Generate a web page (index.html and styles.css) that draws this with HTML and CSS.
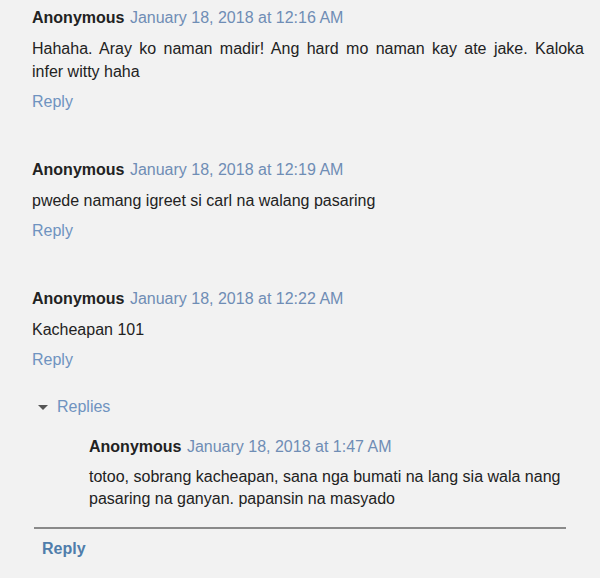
FILE: index.html
```html
<!DOCTYPE html>
<html lang="en">
<head>
    <meta charset="UTF-8">
    <title>Comments</title>
    <link rel="stylesheet" href="styles.css">
</head>
<body>
    <div class="comments">
        <div class="comment first">
            <div class="comment-header">
                <span class="user">Anonymous</span>
                <span class="datetime">January 18, 2018 at 12:16 AM</span>
            </div>
            <p class="comment-content">Hahaha. Aray ko naman madir! Ang hard mo naman kay ate jake. Kaloka infer witty haha</p>
            <div class="comment-actions"><a href="#">Reply</a></div>
        </div>

        <div class="comment">
            <div class="comment-header">
                <span class="user">Anonymous</span>
                <span class="datetime">January 18, 2018 at 12:19 AM</span>
            </div>
            <p class="comment-content">pwede namang igreet si carl na walang pasaring</p>
            <div class="comment-actions"><a href="#">Reply</a></div>
        </div>

        <div class="comment">
            <div class="comment-header">
                <span class="user">Anonymous</span>
                <span class="datetime">January 18, 2018 at 12:22 AM</span>
            </div>
            <p class="comment-content">Kacheapan 101</p>
            <div class="comment-actions"><a href="#">Reply</a></div>
        </div>

        <div class="thread">
            <div class="thread-toggle"><span class="arrow"></span><a href="#">Replies</a></div>
            <div class="thread-chrome">
                <div class="comment reply-comment">
                    <div class="comment-header">
                        <span class="user">Anonymous</span>
                        <span class="datetime">January 18, 2018 at 1:47 AM</span>
                    </div>
                    <p class="comment-content">totoo, sobrang kacheapan, sana nga bumati na lang sia wala nang pasaring na ganyan. papansin na masyado</p>
                </div>
                <div class="continue"><a href="#">Reply</a></div>
            </div>
        </div>
    </div>
</body>
</html>
```

FILE: styles.css
```css
body {
    margin: 0;
    background-color: #f2f2f2;
    font-family: "Liberation Sans", Arial, sans-serif;
    font-size: 16px;
    color: #222;
}

a {
    text-decoration: none;
    color: #6f93c0;
}

.comments {
    padding: 7px 16px 0 32px;
}

.comment {
    margin-top: 46px;
}

.comment.first {
    margin-top: 0;
}

.comment-header {
    line-height: 22px;
}

.user {
    font-weight: bold;
    color: #222;
    margin-right: 1px;
}

.datetime {
    color: #6f8db5;
}

.comment-content {
    margin: 8px 0 0;
    line-height: 23px;
    text-align: justify;
}

.comment-actions {
    margin-top: 8px;
    line-height: 22px;
}

.thread {
    margin-top: 25px;
}

.thread-toggle {
    line-height: 22px;
    padding-left: 6px;
    display: flex;
    align-items: center;
}

.arrow {
    width: 0;
    height: 0;
    border-left: 5px solid transparent;
    border-right: 5px solid transparent;
    border-top: 5px solid #555;
    margin-right: 9px;
}

.thread-chrome {
    margin: 18px 18px 0 2px;
}

.reply-comment {
    margin: 0 0 0 55px;
}

.reply-comment .comment-content {
    line-height: 22px;
    text-align: left;
}

.continue {
    margin-top: 17px;
    border-top: 2px solid #8a8a8a;
    padding: 9px 0 0 8px;
    line-height: 22px;
}

.continue a {
    font-weight: bold;
    color: #4f7dab;
}
```
